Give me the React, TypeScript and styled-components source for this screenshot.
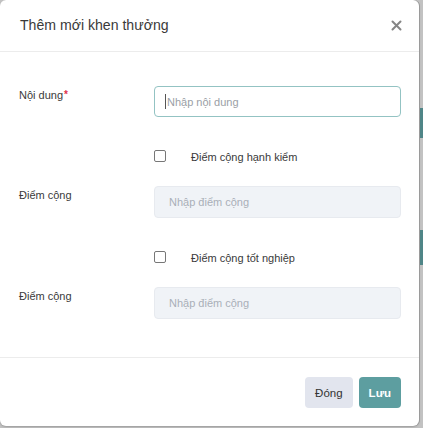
import React from "react";
import styled, { createGlobalStyle } from "styled-components";

const FONT = `"Liberation Sans", Arial, sans-serif`;

const Global = createGlobalStyle`
  html, body { margin: 0; padding: 0; }
  body {
    background: #c2c2c2;
    font-family: ${FONT};
    width: 423px;
    height: 428px;
    overflow: hidden;
  }
`;

const Stage = styled.div`
  display: flex;
  width: 423px;
  height: 428px;
`;

const Modal = styled.div`
  width: 419px;
  height: 426px;
  background: #fff;
  border-radius: 6px;
  box-shadow: 1px 0 0 #9a9a9a, 0 1px 2px rgba(0, 0, 0, 0.2);
  display: flex;
  flex-direction: column;
  flex-shrink: 0;
`;

const Behind = styled.div`
  flex: 1;
  display: flex;
  flex-direction: column;
  padding-top: 108px;
  gap: 92px;
`;

const TealMark = styled.div<{ $h: number }>`
  height: ${(p) => p.$h}px;
  margin-left: 1px;
  background: #4f8587;
`;

const Header = styled.div`
  height: 51px;
  border-bottom: 1px solid #ececec;
  display: flex;
  align-items: center;
  justify-content: space-between;
  padding: 0 20px 0 20px;
  box-sizing: content-box;
`;

const Title = styled.h1`
  margin: 0;
  margin-top: -2px;
  font-size: 14.1px;
  font-weight: 400;
  color: #3a3a3a;
`;

const CloseButton = styled.button`
  border: none;
  background: none;
  padding: 0;
  width: 12px;
  height: 12px;
  margin-right: -3px;
  display: flex;
  align-items: center;
  justify-content: center;
  cursor: pointer;
`;

const Body = styled.div`
  padding: 34px 18px 38px 19px;
  border-bottom: 1px solid #ececec;
  display: flex;
  flex-direction: column;
`;

const Row = styled.div`
  display: grid;
  grid-template-columns: 135px 1fr;
  align-items: start;
`;

const Label = styled.label`
  font-size: 11px;
  color: #3a3a3a;
  padding-top: 2px;
  line-height: 14px;
`;

const Required = styled.span`
  color: #e0304a;
  font-size: 10px;
  font-weight: 700;
  vertical-align: top;
  margin-left: 1px;
`;

const InputWrap = styled.div`
  position: relative;
`;

const TextInput = styled.input<{ $disabled?: boolean }>`
  box-sizing: border-box;
  width: 100%;
  height: ${(p) => (p.$disabled ? 32 : 31)}px;
  border-radius: 4px;
  border: 1px solid ${(p) => (p.$disabled ? "#e7eaef" : "#93c3c3")};
  background: ${(p) => (p.$disabled ? "#f0f3f7" : "#fff")};
  padding: 0 0 0 ${(p) => (p.$disabled ? 14 : 12)}px;
  font-family: ${FONT};
  font-size: 11px;
  color: #333;
  outline: none;
  &::placeholder {
    color: ${(p) => (p.$disabled ? "#a9afb8" : "#9aa0a6")};
  }
`;

const Caret = styled.span`
  position: absolute;
  left: 11px;
  top: 8px;
  width: 1px;
  height: 15px;
  background: #555;
`;

const CheckRow = styled.div`
  display: flex;
  align-items: center;
  height: 20px;
  margin: 30px 0 19px 135px;
  gap: 25px;
`;

const Box = styled.span`
  box-sizing: border-box;
  width: 12px;
  height: 12px;
  border: 1px solid #777;
  border-radius: 2px;
  background: #fff;
  margin-top: -2px;
`;

const CheckText = styled.span`
  font-size: 11px;
  color: #3a3a3a;
`;

const Footer = styled.div`
  display: flex;
  justify-content: flex-end;
  gap: 6px;
  padding: 19px 18px 0 0;
`;

const Button = styled.button<{ $primary?: boolean }>`
  height: 31px;
  border: none;
  border-radius: 4px;
  padding: 0 ${(p) => (p.$primary ? 10 : 10)}px;
  font-family: ${FONT};
  font-size: 11.5px;
  font-weight: ${(p) => (p.$primary ? 700 : 400)};
  background: ${(p) => (p.$primary ? "#5d9ea0" : "#e2e5ee")};
  color: ${(p) => (p.$primary ? "#fff" : "#333")};
  cursor: pointer;
`;

export default function App() {
  return (
    <>
      <Global />
      <Stage>
        <Modal>
          <Header>
            <Title>Thêm mới khen thưởng</Title>
            <CloseButton aria-label="Đóng">
              <svg width="11" height="11" viewBox="0 0 11 11">
                <path d="M1.5 1.5 L9.5 9.5 M9.5 1.5 L1.5 9.5" stroke="#858585" strokeWidth="2" strokeLinecap="round" />
              </svg>
            </CloseButton>
          </Header>
          <Body>
            <Row>
              <Label>
                Nội dung<Required>*</Required>
              </Label>
              <InputWrap>
                <TextInput placeholder="Nhập nội dung" />
                <Caret />
              </InputWrap>
            </Row>
            <CheckRow>
              <Box />
              <CheckText>Điểm cộng hạnh kiểm</CheckText>
            </CheckRow>
            <Row>
              <Label>Điểm cộng</Label>
              <TextInput $disabled disabled placeholder="Nhập điểm cộng" />
            </Row>
            <CheckRow>
              <Box />
              <CheckText>Điểm cộng tốt nghiệp</CheckText>
            </CheckRow>
            <Row>
              <Label>Điểm cộng</Label>
              <TextInput $disabled disabled placeholder="Nhập điểm cộng" />
            </Row>
          </Body>
          <Footer>
            <Button>Đóng</Button>
            <Button $primary>Lưu</Button>
          </Footer>
        </Modal>
        <Behind>
          <TealMark $h={30} />
          <TealMark $h={35} />
        </Behind>
      </Stage>
    </>
  );
}
